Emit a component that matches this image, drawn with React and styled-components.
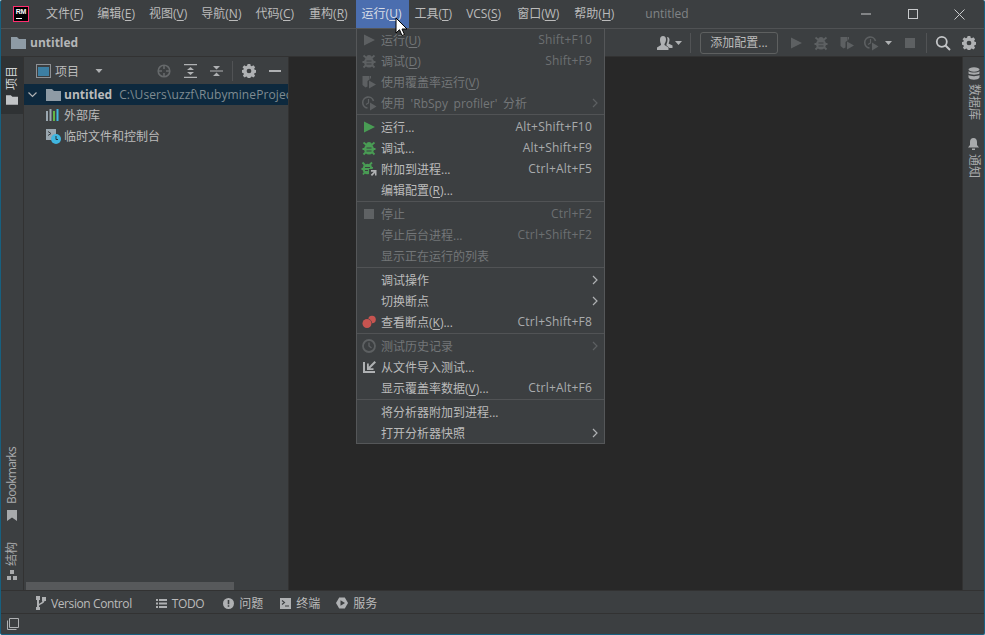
import React from 'react';
import styled, { createGlobalStyle } from 'styled-components';

const FONT = '"Open Sans", "Noto Sans CJK SC", sans-serif';

const GlobalStyle = createGlobalStyle`
  html, body {
    margin: 0;
    padding: 0;
    background: #fff;
    overflow: hidden;
  }
  * { box-sizing: border-box; }
`;

const Win = styled.div`
  position: relative;
  width: 985px;
  height: 635px;
  display: flex;
  flex-direction: column;
  background: #3c3f41;
  border-left: 1px solid #17607f;
  border-right: 1px solid #17607f;
  border-bottom: 1px solid #17607f;
  border-radius: 2px;
  overflow: hidden;
  font-family: ${FONT};
  font-size: 12px;
  color: #bbbbbb;
  u { text-underline-offset: 2px; text-decoration-thickness: 1px; }
`;

/* title bar */
const TitleBar = styled.div`
  height: 29px;
  flex: none;
  display: flex;
  align-items: stretch;
  border-bottom: 1px solid #505254;
  padding-left: 12px;
`;
const Logo = styled.div`
  width: 16px;
  height: 16px;
  margin: 6px 10px 0 0;
  background: #000;
  border: 1px solid #ff2d6f;
  color: #fff;
  font: bold 7px/7px "Liberation Sans", sans-serif;
  letter-spacing: -0.3px;
  text-align: center;
  padding-top: 1px;
  position: relative;
  &::after {
    content: '';
    position: absolute;
    left: 2px;
    bottom: 2px;
    width: 6px;
    height: 1px;
    background: #fff;
  }
`;
const MenuBar = styled.div`
  display: flex;
  margin-right: 24px;
`;
const MenuTitle = styled.div`
  padding: ${(p) => (p.$active ? '0 8px 0 6px' : '0 7px')};
  margin-left: ${(p) => p.$shift || 0}px;
  margin-right: ${(p) => (p.$active ? -2 : 0)}px;
  height: 28px;
  line-height: 28px;
  white-space: nowrap;
  background: ${(p) => (p.$active ? '#4b6eaf' : 'transparent')};
  color: ${(p) => (p.$active ? '#d8dde6' : '#bbbbbb')};
`;
const WinTitle = styled.div`
  line-height: 27px;
  color: #808486;
  flex: 1;
`;
const WinButtons = styled.div`
  display: flex;
  align-items: center;
  height: 28px;
  padding-right: 1px;
`;
const WinButton = styled.div`
  width: 47px;
  display: flex;
  justify-content: center;
  svg { display: block; }
`;

/* nav bar */
const NavBar = styled.div`
  height: 28px;
  flex: none;
  display: flex;
  align-items: center;
  padding-left: 10px;
  border-bottom: 1px solid #323232;
`;
const NavName = styled.div`
  font-weight: 700;
  margin-left: 4px;
  flex: 1;
  color: #b4b6b8;
`;
const NavTools = styled.div`
  display: flex;
  align-items: center;
  padding-right: 8px;
`;
const Sep = styled.div`
  width: 1px;
  height: 20px;
  background: #515355;
  margin: ${(p) => p.$margin || '0 9px'};
`;
const ConfigButton = styled.div`
  width: 78px;
  height: 22px;
  border: 1px solid #5e6060;
  border-radius: 3px;
  text-align: center;
  line-height: 20px;
  margin-right: 10px;
  white-space: nowrap;
`;
const Tool = styled.div`
  display: flex;
  margin: ${(p) => p.$margin || '0'};
`;

/* body */
const Main = styled.div`
  flex: 1;
  min-height: 0;
  display: flex;
`;
const Stripe = styled.div`
  width: ${(p) => (p.$right ? '22px' : '23px')};
  flex: none;
  display: flex;
  flex-direction: column;
  border-${(p) => (p.$right ? 'left' : 'right')}: 1px solid #323232;
`;
const StripeTab = styled.div`
  display: flex;
  flex-direction: column;
  align-items: center;
  gap: ${(p) => p.$gap || 5}px;
  padding: ${(p) => p.$pad || '8px 0'};
  background: ${(p) => (p.$active ? '#2f3234' : 'transparent')};
`;
const StripeFill = styled.div`
  flex: 1;
`;
const VText = styled.div`
  writing-mode: vertical-rl;
  text-orientation: sideways;
  white-space: nowrap;
  line-height: 14px;
  letter-spacing: ${(p) => p.$spacing || 0}px;
  transform: ${(p) => (p.$flip ? 'rotate(180deg)' : 'none')};
  color: ${(p) => (p.$active ? '#d0d2d4' : '#a8aaac')};
`;
const Panel = styled.div`
  width: 265px;
  flex: none;
  display: flex;
  flex-direction: column;
  border-right: 1px solid #323232;
`;
const PanelHead = styled.div`
  height: 27px;
  flex: none;
  display: flex;
  align-items: center;
  padding-left: 12px;
`;
const PanelTitle = styled.div`
  margin: 0 16px 0 4px;
  width: 24px;
  white-space: nowrap;
`;
const Tree = styled.div`
  flex: 1;
  min-height: 0;
  overflow: hidden;
`;
const TreeRow = styled.div`
  height: ${(p) => (p.$selected ? '21px' : '20.5px')};
  display: flex;
  align-items: center;
  white-space: nowrap;
  overflow: hidden;
  padding-left: ${(p) => p.$indent}px;
  background: ${(p) => (p.$selected ? '#0d293e' : 'transparent')};
`;
const RootName = styled.span`
  font-weight: 700;
  margin: 0 7px 0 3px;
`;
const RootPath = styled.span`
  color: #7f8b91;
  letter-spacing: 0.1px;
`;
const TreeLabel = styled.span`
  margin-left: ${(p) => p.$gap || 4}px;
`;
const ScrollTrack = styled.div`
  height: 8px;
  flex: none;
  padding-left: 2px;
`;
const ScrollThumb = styled.div`
  width: 208px;
  height: 8px;
  background: #57595b;
`;
const Editor = styled.div`
  flex: 1;
  background: #282828;
`;

/* bottom */
const ToolBar = styled.div`
  height: 24px;
  flex: none;
  display: flex;
  align-items: center;
  padding: 2px 0 0 35px;
  border-top: 1px solid #323232;
  border-bottom: 1px solid #323232;
`;
const ToolTab = styled.div`
  display: flex;
  align-items: center;
  gap: 5px;
  margin-right: ${(p) => p.$gap}px;
  white-space: nowrap;
  letter-spacing: ${(p) => p.$spacing || 0}px;
`;
const StatusBar = styled.div`
  height: 20px;
  flex: none;
  display: flex;
  align-items: center;
  padding-left: 6px;
`;

/* popup */
const Popup = styled.div`
  position: absolute;
  left: 355px;
  top: 28px;
  width: 249px;
  height: 416px;
  background: #3c3f41;
  border: 1px solid #555759;
`;
const Divider = styled.div`
  height: 1px;
  margin: 1px 0;
  background: #515355;
`;
const Row = styled.div`
  height: 21px;
  display: flex;
  align-items: center;
  padding-right: 12px;
  white-space: nowrap;
  word-spacing: 2.5px;
  color: ${(p) => (p.$off ? '#737678' : '#bbbbbb')};
`;
const RowIcon = styled.div`
  width: 24px;
  flex: none;
  display: flex;
  justify-content: center;
  padding-right: 1px;
`;
const Keys = styled.div`
  margin-left: auto;
  letter-spacing: 0.2px;
  color: ${(p) => (p.$off ? '#6c6f71' : '#a9abad')};
`;
const Arrow = styled.svg`
  margin-left: auto;
  margin-right: -6px;
`;
const Pointer = styled.svg`
  position: absolute;
  left: 394px;
  top: 17px;
`;

/* drawings */
const Ico = ({ size = 16, w, h, children, vb }) => (
  <svg width={w || size} height={h || size} viewBox={vb || '0 0 16 16'} style={{ display: 'block', flex: 'none' }}>
    {children}
  </svg>
);
const Play = ({ c }) => (
  <Ico><path d="M3 2.500 L14 8 L3 13.500 Z" fill={c} /></Ico>
);
const Bug = ({ c }) => (
  <Ico>
    <path
      d="M2.500 2.500L5.500 5M13.500 2.500L10.500 5M1.500 9H4M14.500 9H12M2.500 14.500L5 12M13.500 14.500L11 12"
      fill="none"
      stroke={c}
      strokeWidth="1.800"
    />
    <ellipse cx="8" cy="9.300" rx="5" ry="5.300" fill={c} />
    <path d="M5 5C5 3 6.500 2 8 2s3 1 3 3z" fill={c} />
    <path fill="#3c3f41" d="M5.500 7.500h5v1h-5zM5.500 10.500h5v1h-5z" />
  </Ico>
);
const Cover = ({ c }) => (
  <Ico>
    <path fill={c} d="M1.500 2h7v3.500L6.500 7v5.500l-2 1-3-2.500z" />
    <path fill={c} d="M9 2h1v2.500H9z" />
    <path fill={c} d="M8 6.500 L15 10.500 L8 14.500 Z" />
  </Ico>
);
const Profiler = ({ c }) => (
  <Ico>
    <path fill="none" stroke={c} strokeWidth="1.600" d="M6.500 13A5.500 5.500 0 1 1 12.500 6" />
    <path fill="none" stroke={c} strokeWidth="1.200" d="M7.500 4v4L5 9.500" />
    <path fill={c} d="M9 7.500 L15.500 11.500 L9 15.500 Z" />
  </Ico>
);
const Stop = ({ c }) => (
  <Ico><rect x="3" y="3" width="10" height="10" fill={c} /></Ico>
);
const Gear = ({ c = '#afb1b3', size = 14 }) => (
  <Ico size={size} vb="0 0 16 16">
    <path
      fill={c}
      fillRule="evenodd"
      d="M6.500 0h3l.4 2 1.300.6 1.800-1.100 2 2.100-1.100 1.700.5 1.300 2 .4v3l-2 .4-.5 1.300 1.100 1.700-2 2-1.800-1-1.300.5-.4 2h-3l-.4-2-1.300-.5-1.800 1-2-2 1.100-1.700-.5-1.300-2-.4v-3l2-.4.5-1.300L.6 3.600l2-2.100 1.800 1.100 1.300-.6zM8 5.300a2.700 2.700 0 1 0 0 5.400 2.700 2.700 0 0 0 0-5.400z"
    />
  </Ico>
);
const Caret = ({ c = '#afb1b3', w = 7 }) => (
  <Ico w={w} h={4} vb="0 0 7 4"><path d="M0 0h7L3.500 4z" fill={c} /></Ico>
);
const Folder = ({ c = '#8e9ba5', w = 15, h = 12 }) => (
  <Ico w={w} h={h} vb="0 0 15 12"><path d="M0 0h6l2 2h7v10H0z" fill={c} /></Ico>
);
const ChevronRight = ({ c }) => (
  <Arrow width="6" height="10" viewBox="0 0 6 10">
    <path d="M1 1l4 4-4 4" fill="none" stroke={c} strokeWidth="1.200" />
  </Arrow>
);

const gOff = '#5d6062';
const green = '#499c54';
const rowIcons = {
  run0: <Play c={gOff} />,
  debug0: <Bug c={gOff} />,
  cover0: <Cover c={gOff} />,
  prof0: <Profiler c={gOff} />,
  run: <Play c={green} />,
  debug: <Bug c={green} />,
  attach: (
    <Ico>
      <path
        d="M1.500 1.500L4 4M11 1.500L8.500 4M.5 8H3M2 13.500L4 11"
        fill="none"
        stroke={green}
        strokeWidth="1.800"
      />
      <ellipse cx="6.500" cy="8" rx="5" ry="5.300" fill={green} />
      <path fill={green} d="M9 6h3v1.500H9z" />
      <path fill="#3c3f41" d="M4 6h5v1H4zM4 9h3v1H4z" />
      <path fill="#3c3f41" d="M8 8h8v8H8z" />
      <path fill="#afb1b3" d="M10 9h5.500v5.500H14v-2.500L11 15l-1.200-1.200 3-3H10z" />
    </Ico>
  ),
  stop0: <Stop c="#5f6264" />,
  breakpoints: (
    <Ico>
      <circle cx="11" cy="5.500" r="3.800" fill="#c75450" />
      <circle cx="6" cy="9.500" r="5" fill="#3c3f41" />
      <circle cx="6" cy="9.500" r="4.500" fill="#c75450" />
    </Ico>
  ),
  history0: (
    <Ico>
      <circle cx="8" cy="8" r="6" fill="none" stroke="#5d6062" strokeWidth="1.800" />
      <path d="M8 4.500V8l2.500 2" fill="none" stroke="#5d6062" strokeWidth="1.400" />
    </Ico>
  ),
  importTest: (
    <Ico>
      <path fill="#afb1b3" d="M2 3h2v9h10v2H2z" />
      <path fill="#afb1b3" d="M14.500 2.500 8.800 8.200V5H7v6.500h6.500V9.700H10.200L16 4z" transform="translate(-1 -.5)" />
    </Ico>
  ),
};

const groups = [
  [
    { icon: 'run0', label: '运行(U)', keys: 'Shift+F10', off: true },
    { icon: 'debug0', label: '调试(D)', keys: 'Shift+F9', off: true },
    { icon: 'cover0', label: '使用覆盖率运行(V)', off: true },
    { icon: 'prof0', label: "使用 'RbSpy profiler' 分析", off: true, sub: true },
  ],
  [
    { icon: 'run', label: '运行...', keys: 'Alt+Shift+F10' },
    { icon: 'debug', label: '调试...', keys: 'Alt+Shift+F9' },
    { icon: 'attach', label: '附加到进程...', keys: 'Ctrl+Alt+F5' },
    { label: '编辑配置(R)...' },
  ],
  [
    { icon: 'stop0', label: '停止', keys: 'Ctrl+F2', off: true },
    { label: '停止后台进程...', keys: 'Ctrl+Shift+F2', off: true },
    { label: '显示正在运行的列表', off: true },
  ],
  [
    { label: '调试操作', sub: true },
    { label: '切换断点', sub: true },
    { icon: 'breakpoints', label: '查看断点(K)...', keys: 'Ctrl+Shift+F8' },
  ],
  [
    { icon: 'history0', label: '测试历史记录', off: true, sub: true },
    { icon: 'importTest', label: '从文件导入测试...' },
    { label: '显示覆盖率数据(V)...', keys: 'Ctrl+Alt+F6' },
  ],
  [
    { label: '将分析器附加到进程...' },
    { label: '打开分析器快照', sub: true },
  ],
];

const menus = [
  { label: '文件(F)' },
  { label: '编辑(E)' },
  { label: '视图(V)' },
  { label: '导航(N)' },
  { label: '代码(C)' },
  { label: '重构(R)', shift: 1 },
  { label: '运行(U)', shift: 1, active: true },
  { label: '工具(T)' },
  { label: 'VCS(S)' },
  { label: '窗口(W)', shift: 2 },
  { label: '帮助(H)', shift: 1 },
];

// underlines the mnemonic letter in "(X)"
const Label = ({ text }) => {
  const m = text.match(/^(.*\()(\w)(\).*)$/);
  if (!m) return <span>{text}</span>;
  return (
    <span>
      {m[1]}
      <u>{m[2]}</u>
      {m[3]}
    </span>
  );
};

const RunMenu = () => (
  <Popup>
    {groups.map((items, i) => (
      <React.Fragment key={i}>
        {i > 0 && <Divider />}
        {items.map((item) => (
          <Row key={item.label} $off={item.off}>
            <RowIcon>{item.icon && rowIcons[item.icon]}</RowIcon>
            <Label text={item.label} />
            {item.keys && <Keys $off={item.off}>{item.keys}</Keys>}
            {item.sub && <ChevronRight c={item.off ? '#5d6062' : '#afb1b3'} />}
          </Row>
        ))}
      </React.Fragment>
    ))}
  </Popup>
);

const tabs = [
  {
    label: 'Version Control',
    spacing: -0.4,
    gap: 24,
    icon: (
      <Ico w={10} h={14} vb="0 0 10 14">
        <path fill="#afb1b3" d="M0 0h4v4H3v4c1-1 3-1.500 3.500-3H6V1h4v4H8.500C8 8 4 8 3 10v1h1v3H0v-3h1V4H0z" />
      </Ico>
    ),
  },
  {
    label: 'TODO',
    spacing: -0.4,
    gap: 19,
    icon: (
      <Ico w={11} h={9} vb="0 0 11 9">
        <path fill="#afb1b3" d="M0 0h2v2H0zM3 0h8v2H3zM0 3.500h2v2H0zM3 3.500h8v2H3zM0 7h2v2H0zM3 7h8v2H3z" />
      </Ico>
    ),
  },
  {
    label: '问题',
    gap: 17,
    icon: (
      <Ico w={11} h={11} vb="0 0 11 11">
        <circle cx="5.500" cy="5.500" r="5.500" fill="#afb1b3" />
        <path fill="#3c3f41" d="M4.700 2h1.600v4.200H4.700zM4.700 7.200h1.600v1.600H4.700z" />
      </Ico>
    ),
  },
  {
    label: '终端',
    gap: 16,
    icon: (
      <Ico w={11} h={11} vb="0 0 11 11">
        <rect width="11" height="11" fill="#afb1b3" />
        <path fill="none" stroke="#3c3f41" strokeWidth="1.100" d="M2 2.500l2.500 2L2 6.500M5 8h4" />
      </Ico>
    ),
  },
  {
    label: '服务',
    gap: 0,
    icon: (
      <Ico w={12} h={12} vb="0 0 12 12">
        <path fill="#afb1b3" d="M3.200 .5h5.600L12 6l-3.200 5.500H3.200L0 6z" />
        <path fill="#3c3f41" d="M4.500 3.300 9 6l-4.500 2.700z" />
      </Ico>
    ),
  },
];

export default function App() {
  return (
    <>
      <GlobalStyle />
      <Win>
        <TitleBar>
          <Logo>RM</Logo>
          <MenuBar>
            {menus.map((m) => (
              <MenuTitle key={m.label} $active={m.active} $shift={m.shift}>
                <Label text={m.label} />
              </MenuTitle>
            ))}
          </MenuBar>
          <WinTitle>untitled</WinTitle>
          <WinButtons>
            <WinButton>
              <Ico w={10} h={2} vb="0 0 10 2"><path d="M0 1h10" stroke="#c8cacc" /></Ico>
            </WinButton>
            <WinButton>
              <Ico w={10} h={10} vb="0 0 10 10"><rect x=".5" y=".5" width="9" height="9" fill="none" stroke="#c8cacc" /></Ico>
            </WinButton>
            <WinButton>
              <Ico w={11} h={11} vb="0 0 11 11"><path d="M.5.500l10 10M10.500.500l-10 10" stroke="#c8cacc" /></Ico>
            </WinButton>
          </WinButtons>
        </TitleBar>

        <NavBar>
          <Folder />
          <NavName>untitled</NavName>
          <NavTools>
            <Tool $margin="0 2px 0 0">
              <Ico w={16} h={14} vb="0 0 16 14">
                <path fill="#afb1b3" d="M6 0c2 0 3 1.500 3 3.500S8 7 7.500 8v1l4 2.500V14H0v-2.500L4 9V8C3.500 7 3 5.500 3 3.500S4 0 6 0z" />
                <path fill="#afb1b3" d="M10 1c1.700 0 2.500 1.200 2.500 2.800S12 6.500 11.500 7.500l4 2V12H12.500L9.500 9.500V8c.7-1 1-2.800 1-4.500 0-1-.2-1.800-.5-2.500z" />
              </Ico>
            </Tool>
            <Caret />
            <Sep $margin="0 9px 0 8px" />
            <ConfigButton>添加配置...</ConfigButton>
            <Tool $margin="0 9px 0 0"><Play c="#5d6062" /></Tool>
            <Tool $margin="0 10px 0 0"><Bug c="#5d6062" /></Tool>
            <Tool $margin="0 8px 0 0"><Cover c="#5d6062" /></Tool>
            <Tool $margin="0 6px 0 0"><Profiler c="#5d6062" /></Tool>
            <Tool $margin="0 10px 0 0"><Caret /></Tool>
            <Tool><Stop c="#5d6062" /></Tool>
            <Sep $margin="0 8px 0 8px" />
            <Tool $margin="0 11px 0 0">
              <Ico>
                <circle cx="6.800" cy="6.800" r="5" fill="none" stroke="#c4c6c8" strokeWidth="1.800" />
                <path d="M10.500 10.500L15 15" stroke="#c4c6c8" strokeWidth="2" />
              </Ico>
            </Tool>
            <Gear />
          </NavTools>
        </NavBar>

        <Main>
          <Stripe>
            <StripeTab $active $pad="9px 0 9px">
              <VText $flip $active>项目</VText>
              <Folder c="#c2c4c6" w={12} h={10} />
            </StripeTab>
            <StripeFill />
            <StripeTab $pad="0" $gap={6}>
              <VText $flip $spacing={-0.7}>Bookmarks</VText>
              <Ico w={10} h={11} vb="0 0 10 11"><path d="M0 0h10v11L5 7.500 0 11z" fill="#a8aaac" /></Ico>
            </StripeTab>
            <StripeTab $pad="21px 0 10px" $gap={4}>
              <VText $flip>结构</VText>
              <Ico w={10} h={10} vb="0 0 10 10">
                <path d="M3 0h4v4H3zM0 6h4v4H0zM6 6h4v4H6z" fill="#a8aaac" />
              </Ico>
            </StripeTab>
          </Stripe>

          <Panel>
            <PanelHead>
              <Ico w={15} h={14} vb="0 0 15 14">
                <rect x=".5" y=".5" width="14" height="13" fill="none" stroke="#8e9195" />
                <rect x="2" y="3" width="11" height="9" fill="#3d7fa3" />
              </Ico>
              <PanelTitle>项目</PanelTitle>
              <Caret w={8} />
              <Tool $margin="0 0 0 54px">
                <Ico w={14} h={14} vb="0 0 14 14">
                  <circle cx="7" cy="7" r="5.800" fill="none" stroke="#66696b" strokeWidth="1.600" />
                  <path d="M7 1v4M7 9v4M1 7h4M9 7h4" stroke="#66696b" strokeWidth="1.600" />
                </Ico>
              </Tool>
              <Tool $margin="0 0 0 13px">
                <Ico w={13} h={14} vb="0 0 13 14">
                  <path d="M0 .5h13M0 13.500h13" stroke="#afb1b3" strokeWidth="1.400" />
                  <path d="M6.500 3L10 6H3zM6.500 11L3 8h7z" fill="#afb1b3" />
                </Ico>
              </Tool>
              <Tool $margin="0 0 0 13px">
                <Ico w={13} h={14} vb="0 0 13 14">
                  <path d="M0 7h13" stroke="#afb1b3" strokeWidth="1.200" />
                  <path d="M6.500 5.500L3 2h7zM6.500 8.500L10 12H3z" fill="#afb1b3" />
                </Ico>
              </Tool>
              <Sep $margin="0 9px 0 9px" />
              <Gear />
              <Tool $margin="0 0 0 13px">
                <Ico w={12} h={2} vb="0 0 12 2"><path d="M0 1h12" stroke="#afb1b3" strokeWidth="2" /></Ico>
              </Tool>
            </PanelHead>
            <Tree>
              <TreeRow $selected $indent={4}>
                <Tool $margin="0 9px 0 0">
                  <Ico w={9} h={6} vb="0 0 9 6"><path d="M.5.500l4 4 4-4" fill="none" stroke="#afb1b3" strokeWidth="1.200" /></Ico>
                </Tool>
                <Folder />
                <RootName>untitled</RootName>
                <RootPath>C:\Users\uzzf\RubymineProjects</RootPath>
              </TreeRow>
              <TreeRow $indent={22}>
                <Ico w={14} h={12} vb="0 0 14 12">
                  <path d="M0 2h2v10H0z" fill="#9aa7b0" />
                  <path d="M3.500 0h2v12h-2z" fill="#9aa7b0" />
                  <path d="M7 2h2v10H7z" fill="#62b543" />
                  <path d="M10.500 0h2v12h-2z" fill="#40b6e0" />
                </Ico>
                <TreeLabel>外部库</TreeLabel>
              </TreeRow>
              <TreeRow $indent={22}>
                <Ico w={15} h={16} vb="0 0 15 16">
                  <path d="M0 1h10v11H0z" fill="#9aa7b0" />
                  <path d="M2 3.500l3 2-3 2" fill="none" stroke="#3c3f41" />
                  <circle cx="10" cy="11" r="5" fill="#40b6e0" />
                  <path d="M10 8v3.500h2" fill="none" stroke="#23323c" />
                </Ico>
                <TreeLabel $gap={3}>临时文件和控制台</TreeLabel>
              </TreeRow>
            </Tree>
            <ScrollTrack><ScrollThumb /></ScrollTrack>
          </Panel>

          <Editor />

          <Stripe $right>
            <StripeTab $pad="10px 0 0" $gap={4}>
              <Ico w={12} h={13} vb="0 0 12 13">
                <ellipse cx="6" cy="2.500" rx="5.500" ry="2.200" fill="#a8aaac" />
                <path d="M.5 4.300C2 6 10 6 11.500 4.300v2.200C10 8 2 8 .5 6.500zM.5 8C2 9.500 10 9.500 11.500 8v2.500C10 13.500 2 13.500 .5 10.500z" fill="#a8aaac" />
              </Ico>
              <VText>数据库</VText>
            </StripeTab>
            <StripeTab $pad="18px 0 0" $gap={4}>
              <Ico w={11} h={12} vb="0 0 11 12">
                <path d="M5.500 0C8 0 9 2 9 4v3l2 2.500H0L2 7V4c0-2 1-4 3.500-4zM4 10.500h3V12H4z" fill="#a8aaac" />
              </Ico>
              <VText>通知</VText>
            </StripeTab>
          </Stripe>
        </Main>

        <ToolBar>
          {tabs.map((t) => (
            <ToolTab key={t.label} $spacing={t.spacing} $gap={t.gap}>
              {t.icon}
              <span>{t.label}</span>
            </ToolTab>
          ))}
        </ToolBar>
        <StatusBar>
          <Ico w={12} h={12} vb="0 0 12 12">
            <path d="M2.500.5h9v9h-9zM.5 2.500v9h9" fill="none" stroke="#afb1b3" />
          </Ico>
        </StatusBar>

        <RunMenu />
        <Pointer width="13" height="20" viewBox="0 0 13 20">
          <path d="M1 1v15l3.500-3.300L7 18.500l2.500-1L7 12h5z" fill="#fff" stroke="#000" />
        </Pointer>
      </Win>
    </>
  );
}
